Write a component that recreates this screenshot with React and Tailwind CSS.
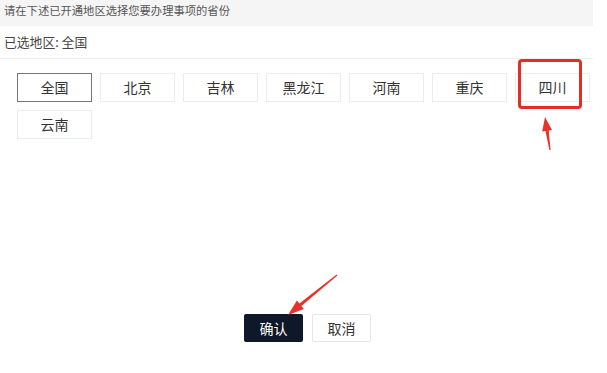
import React from "react";

const regions = ["全国", "北京", "吉林", "黑龙江", "河南", "重庆", "四川", "云南"];

function arrowPoints(tail, tip, head = 14, half = 5, base = 0.6, neck = 1.6) {
  const dx = tip[0] - tail[0];
  const dy = tip[1] - tail[1];
  const len = Math.hypot(dx, dy);
  const ux = dx / len;
  const uy = dy / len;
  const nx = -uy;
  const ny = ux;
  const hx = tip[0] - ux * head;
  const hy = tip[1] - uy * head;
  const p = (x, y) => `${x.toFixed(1)},${y.toFixed(1)}`;
  return [
    p(tail[0] + nx * base, tail[1] + ny * base),
    p(hx + nx * neck, hy + ny * neck),
    p(hx + nx * half, hy + ny * half),
    p(tip[0], tip[1]),
    p(hx - nx * half, hy - ny * half),
    p(hx - nx * neck, hy - ny * neck),
    p(tail[0] - nx * base, tail[1] - ny * base),
  ].join(" ");
}

export default function App() {
  const selected = "全国";
  return (
    <div
      className="relative w-[607px] h-[373px] bg-white overflow-hidden"
      style={{ fontFamily: '"Noto Sans CJK SC", "Noto Sans", sans-serif' }}
    >
      <div className="w-[593px] h-[26px] bg-[#f5f5f5] pl-[4px] pt-[2px] text-[11.3px] leading-[16px] text-[#555]">
        请在下述已开通地区选择您要办理事项的省份
      </div>
      <div className="w-[593px] h-[33px] border-b border-[#eeeeee] pl-[4px] pt-[7px] text-[12.8px] leading-[17px] text-[#444]">
        已选地区: 全国
      </div>

      <div className="flex flex-wrap w-[600px] gap-x-[8px] gap-y-[8px] pl-[17px] pt-[14px]">
        {regions.map((r) => (
          <button
            key={r}
            className={`w-[75px] h-[29px] flex items-center justify-center text-[14px] text-[#333] bg-white ${
              r === selected ? "border border-[#777]" : "border border-[#ececec]"
            }`}
          >
            {r}
          </button>
        ))}
      </div>

      <div className="flex gap-[9px] pl-[244px] mt-[175px]">
        <button className="w-[59px] h-[28px] rounded-[2px] bg-[#0e1828] text-white text-[14px] flex items-center justify-center">
          确认
        </button>
        <button className="w-[59px] h-[28px] rounded-[2px] bg-white border border-[#e6e6e6] text-[#333] text-[14px] flex items-center justify-center">
          取消
        </button>
      </div>

      <div className="absolute left-[518px] top-[59px] w-[64px] h-[50px] border-[3px] border-[#e52d27] rounded-[4px]" />

      <svg className="absolute left-0 top-0 pointer-events-none" width="607" height="373">
        <polygon points={arrowPoints([550, 150], [545, 117], 14, 5)} fill="#e8312b" />
        <polygon points={arrowPoints([337, 275], [288, 315], 16, 5.5)} fill="#e8312b" />
      </svg>
    </div>
  );
}
